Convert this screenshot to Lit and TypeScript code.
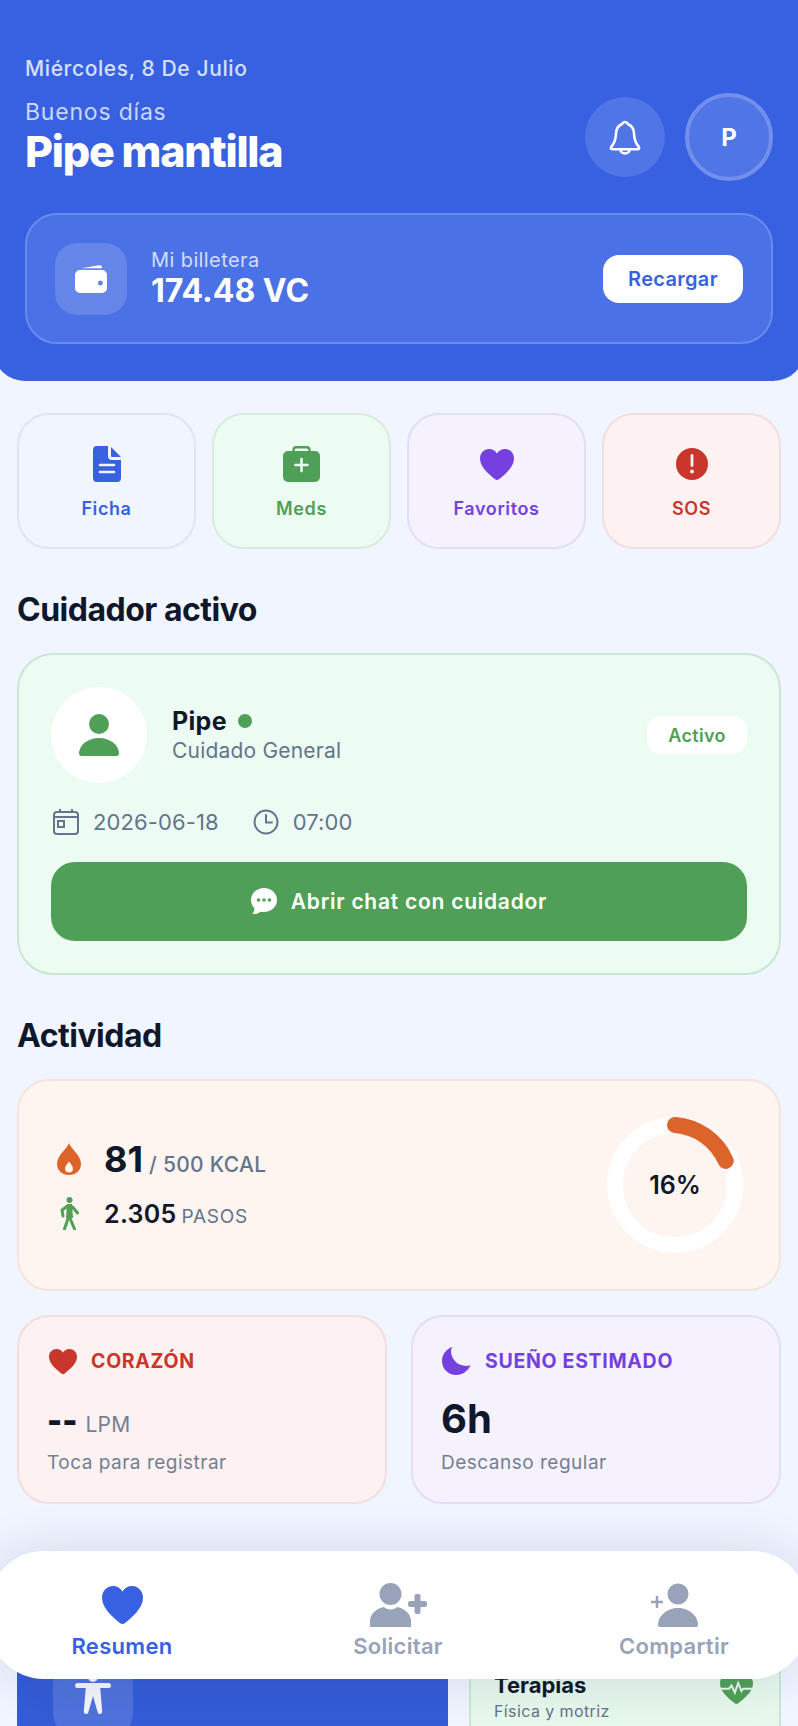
import { LitElement, css, html, svg } from 'lit';
import { customElement } from 'lit/decorators.js';

const heartPath =
  'M12 21.6c-.4 0-.8-.15-1.1-.4C7.6 18.4 2 14 2 8.6 2 5.2 4.5 2.8 7.4 2.8c1.9 0 3.6 1 4.6 2.7 1-1.7 2.7-2.7 4.6-2.7 2.9 0 5.4 2.4 5.4 5.8 0 5.4-5.6 9.8-8.9 12.6-.3.25-.7.4-1.1.4Z';

const heart = (cls: string) => html`<svg class=${cls} viewBox="2 2.8 20 18.8" preserveAspectRatio="none">
  <path d=${heartPath} fill="currentColor"></path>
</svg>`;

const docIcon = svg`<svg class="qa-icon doc" viewBox="0 0 28 36">
  <path fill="currentColor" d="M4 0h11v10a4 4 0 0 0 4 4h9v18a4 4 0 0 1-4 4H4a4 4 0 0 1-4-4V4a4 4 0 0 1 4-4Z"></path>
  <path fill="currentColor" d="M18 1l10 10h-9a1 1 0 0 1-1-1Z"></path>
  <path stroke="#f0f5ff" stroke-width="2.6" stroke-linecap="round" d="M7 19h14M7 26h14"></path>
</svg>`;

const medIcon = svg`<svg class="qa-icon med" viewBox="0 0 37 36">
  <path fill="none" stroke="currentColor" stroke-width="2.4" d="M10.500 6V4a2.800 2.800 0 0 1 2.800-2.800h10.400A2.800 2.800 0 0 1 26.500 4v2"></path>
  <rect y="5" width="37" height="31" rx="5" fill="currentColor"></rect>
  <path stroke="#edfcf3" stroke-width="2.6" stroke-linecap="round" d="M18.500 13v12M12.500 19h12"></path>
</svg>`;

const alertIcon = svg`<svg class="qa-icon sos" viewBox="0 0 32 32">
  <circle cx="16" cy="16" r="16" fill="currentColor"></circle>
  <path stroke="#fef1f1" stroke-width="2.800" stroke-linecap="round" d="M16 7.500v10"></path>
  <circle cx="16" cy="23.500" r="1.900" fill="#fef1f1"></circle>
</svg>`;

const moon = svg`<svg class="mini moon" viewBox="0 0 29 28">
  <path fill="currentColor" d="M10.500 0C4.300 1.700 0 7.400 0 14c0 7.900 6.400 14 14.300 14 6.300 0 11.700-3.900 14.200-9.700-1.300.5-2.800.7-4.400.7C15.800 19 9 12.400 9 4.100 9 2.600 9.500 1.300 10.500 0Z"></path>
</svg>`;

const quickActions = [
  { label: 'Ficha', cls: 'blue', icon: docIcon },
  { label: 'Meds', cls: 'green', icon: medIcon },
  { label: 'Favoritos', cls: 'purple', icon: heart('qa-icon fav') },
  { label: 'SOS', cls: 'red', icon: alertIcon },
];

@customElement('app-root')
export class AppRoot extends LitElement {
  static styles = css`
    :host {
      display: block;
      position: relative;
      width: 798px;
      height: 1726px;
      overflow: hidden;
      background: #f0f5ff;
      font-family: Inter, 'Liberation Sans', sans-serif;
      color: #0f172a;
    }

    svg {
      display: block;
      flex: none;
    }

    .header {
      box-sizing: border-box;
      height: 381px;
      margin: 0 -7px;
      padding: 57px 32px 0;
      background: #3861e2;
      border-radius: 0 0 32px 32px;
      color: #fff;
    }

    .date {
      font-size: 21px;
      line-height: 24px;
      font-weight: 500;
      letter-spacing: 0.6px;
      color: #d5e0fb;
    }

    .top-row {
      display: flex;
      align-items: center;
      margin-top: 12px;
    }

    .greeting {
      flex: 1;
    }

    .hello {
      font-size: 23px;
      line-height: 28px;
      letter-spacing: 0.8px;
      color: #c9d7fa;
    }

    .name {
      font-size: 43px;
      line-height: 50px;
      font-weight: 800;
      letter-spacing: -1.25px;
    }

    .bell {
      width: 80px;
      height: 80px;
      border-radius: 50%;
      background: #4f75e6;
      display: flex;
      align-items: center;
      justify-content: center;
      margin-right: 20px;
    }

    .avatar {
      box-sizing: border-box;
      width: 88px;
      height: 88px;
      border-radius: 50%;
      border: 4px solid #7290eb;
      background: #4f75e6;
      display: flex;
      align-items: center;
      justify-content: center;
      font-size: 24px;
      font-weight: 700;
    }

    .wallet {
      box-sizing: border-box;
      height: 131px;
      margin-top: 32px;
      padding: 0 28px;
      display: flex;
      align-items: center;
      border: 2px solid #6b8aeb;
      border-radius: 32px;
      background: #4a71e5;
    }

    .wallet-icon {
      width: 72px;
      height: 72px;
      border-radius: 22px;
      background: #6685e9;
      display: flex;
      align-items: center;
      justify-content: center;
      margin-right: 24px;
    }

    .wallet-info {
      flex: 1;
      padding-top: 1px;
    }

    .wallet-label {
      font-size: 20px;
      line-height: 24px;
      letter-spacing: 0.4px;
      color: #d2ddfa;
    }

    .wallet-value {
      font-size: 32px;
      line-height: 38px;
      font-weight: 700;
    }

    .recharge {
      width: 140px;
      height: 48px;
      border-radius: 16px;
      background: #fff;
      color: #3861e2;
      font-size: 20px;
      font-weight: 600;
      letter-spacing: 0.3px;
      display: flex;
      align-items: center;
      justify-content: center;
    }

    .content {
      padding: 32px 17px 0;
    }

    .actions {
      display: grid;
      grid-template-columns: repeat(4, 1fr);
      gap: 16px;
    }

    .action {
      box-sizing: border-box;
      height: 136px;
      border: 2px solid;
      border-radius: 32px;
      display: flex;
      flex-direction: column;
      align-items: center;
      font-size: 18px;
      line-height: 24px;
      font-weight: 600;
      letter-spacing: 0.6px;
    }

    .action .slot {
      height: 36px;
      margin-top: 31px;
      margin-bottom: 15px;
      display: flex;
      align-items: center;
    }

    .action.blue { background: #f0f5ff; border-color: #dce4f8; color: #3861e2; }
    .action.green { background: #edfcf3; border-color: #d7ecdf; color: #4fa056; }
    .action.purple { background: #f5f2fe; border-color: #e3ddf6; color: #7540e0; }
    .action.red { background: #fef1f1; border-color: #f3dde0; color: #c9372c; }

    .qa-icon.doc { width: 28px; height: 36px; }
    .qa-icon.med { width: 37px; height: 36px; }
    .qa-icon.fav { width: 34px; height: 31px; }
    .qa-icon.sos { width: 32px; height: 32px; }

    h2 {
      margin: 40px 0 22px;
      font-size: 32px;
      line-height: 42px;
      font-weight: 700;
      letter-spacing: -0.5px;
    }

    .carer {
      box-sizing: border-box;
      height: 322px;
      padding: 32px 32px 0;
      background: #edfcf3;
      border: 2px solid #c9e6d3;
      border-radius: 36px;
    }

    .carer-row {
      display: flex;
      align-items: center;
    }

    .carer-avatar {
      width: 96px;
      height: 96px;
      border-radius: 50%;
      background: #fff;
      display: flex;
      align-items: center;
      justify-content: center;
      margin-right: 25px;
    }

    .carer-info {
      flex: 1;
    }

    .carer-name {
      display: flex;
      align-items: center;
      gap: 11px;
      font-size: 25px;
      line-height: 32px;
      font-weight: 700;
      letter-spacing: 0.3px;
    }

    .dot {
      width: 14px;
      height: 14px;
      border-radius: 50%;
      background: #4fa056;
    }

    .carer-sub {
      font-size: 21px;
      line-height: 28px;
      letter-spacing: 0.2px;
      color: #64748b;
    }

    .pill {
      width: 100px;
      height: 38px;
      border-radius: 14px;
      background: #fff;
      color: #4fa056;
      font-size: 18px;
      font-weight: 600;
      letter-spacing: 0.3px;
      display: flex;
      align-items: center;
      justify-content: center;
    }

    .meta {
      display: flex;
      align-items: center;
      height: 28px;
      margin-top: 25px;
      font-size: 22px;
      letter-spacing: 0.1px;
      color: #64748b;
    }

    .meta svg { margin-left: 2px; margin-right: 14px; }
    .meta .time { margin-left: 34px; }

    .chat {
      height: 79px;
      margin-top: 26px;
      border-radius: 24px;
      background: #4fa056;
      color: #fff;
      display: flex;
      align-items: center;
      justify-content: center;
      gap: 14px;
      font-size: 21px;
      font-weight: 600;
      letter-spacing: 0.75px;
    }

    .activity {
      box-sizing: border-box;
      height: 212px;
      padding: 0 36px 0 38px;
      display: flex;
      align-items: center;
      justify-content: space-between;
      background: #fef4f0;
      border: 2px solid #f5e3dc;
      border-radius: 32px;
    }

    .stats {
      padding-bottom: 2px;
    }

    .stat {
      display: flex;
      align-items: baseline;
    }

    .stat .big {
      font-size: 36px;
      line-height: 44px;
      font-weight: 700;
    }

    .stat .mid {
      font-size: 25px;
      line-height: 36px;
      font-weight: 600;
      letter-spacing: 0.3px;
    }

    .stat .unit {
      margin-left: 6px;
      font-size: 21px;
      font-weight: 500;
      letter-spacing: 0.3px;
      color: #64748b;
    }

    .stat .unit.light {
      margin-left: 5px;
      font-size: 19px;
      font-weight: 400;
      letter-spacing: 0.7px;
    }

    .stat-row {
      display: flex;
      align-items: center;
      gap: 23px;
    }

    .stat-row + .stat-row {
      margin-top: 15px;
    }

    .ring {
      position: relative;
      width: 136px;
      height: 136px;
    }

    .ring span {
      position: absolute;
      inset: 0;
      display: flex;
      align-items: center;
      justify-content: center;
      font-size: 25px;
      font-weight: 600;
    }

    .metrics {
      display: grid;
      grid-template-columns: 1fr 1fr;
      gap: 24px;
      margin-top: 24px;
    }

    .metric {
      box-sizing: border-box;
      height: 189px;
      padding: 30px 28px 0;
      border: 2px solid;
      border-radius: 32px;
    }

    .metric.red { background: #fef1f1; border-color: #f3dde0; }
    .metric.purple { background: #f5f2fe; border-color: #e3ddf6; }

    .metric-head {
      display: flex;
      align-items: center;
      height: 28px;
      gap: 14px;
      font-size: 19.5px;
      font-weight: 700;
      letter-spacing: 0.7px;
    }

    .metric.red .metric-head { color: #c9372c; }
    .metric.purple .metric-head { color: #7540e0; }

    .mini { width: 28px; height: 25px; margin-left: 2px; }
    .mini.moon { width: 29px; height: 28px; margin-left: 1px; }

    .metric-value {
      display: flex;
      align-items: baseline;
      height: 48px;
      margin-top: 20px;
      font-size: 40px;
      line-height: 48px;
      font-weight: 700;
    }

    .metric-value.dashes {
      height: 46px;
      margin-top: 22px;
      font-size: 32px;
      font-weight: 900;
    }

    .metric-value small {
      margin-left: 8px;
      font-size: 21px;
      font-weight: 400;
      letter-spacing: 0.3px;
      color: #737f92;
    }

    .metric-note {
      margin-top: 7px;
      font-size: 19px;
      line-height: 26px;
      letter-spacing: 0.5px;
      color: #737f92;
    }

    .below {
      display: grid;
      grid-template-columns: 431px 312px;
      gap: 21px;
      margin-top: 90px;
    }

    .tall {
      height: 200px;
      background: #335cd6;
      padding: 60px 0 0 36px;
      border-radius: 32px 32px 0 0;
    }

    .tile {
      width: 80px;
      height: 86px;
      border-radius: 28px;
      background: #4f72db;
      display: flex;
      justify-content: center;
    }

    .tile svg {
      margin-top: 18px;
    }

    .therapy {
      box-sizing: border-box;
      height: 200px;
      padding: 75px 26px 0 23px;
      background: #e7f8ec;
      border: 2px solid #c9e6d3;
      border-radius: 32px 32px 0 0;
      display: flex;
      justify-content: space-between;
    }

    .therapy svg {
      margin-top: 3px;
    }

    .therapy b {
      display: block;
      font-size: 22px;
      line-height: 28px;
      font-weight: 700;
    }

    .therapy span {
      display: block;
      font-size: 16px;
      line-height: 24px;
      letter-spacing: 0.4px;
      color: #64748b;
    }

    .nav {
      position: absolute;
      left: -12px;
      top: 1551px;
      width: 820px;
      height: 128px;
      border-radius: 56px;
      background: #fff;
      box-shadow: 0 0 50px rgba(30, 50, 100, 0.14);
      display: grid;
      grid-template-columns: repeat(3, 276px);
      justify-content: center;
    }

    .nav-item {
      display: flex;
      flex-direction: column;
      align-items: center;
      font-size: 22px;
      line-height: 28px;
      font-weight: 600;
      letter-spacing: 0.3px;
      color: #98a2b8;
    }

    .nav-item.on {
      color: #3861e2;
    }

    .nav-slot {
      height: 44px;
      margin-top: 32px;
      margin-bottom: 5px;
      display: flex;
      align-items: center;
    }

    .nav-heart { width: 41px; height: 38px; }
  `;

  render() {
    return html`
      <div class="header">
        <div class="date">Miércoles, 8 De Julio</div>
        <div class="top-row">
          <div class="greeting">
            <div class="hello">Buenos días</div>
            <div class="name">Pipe mantilla</div>
          </div>
          <div class="bell">
            <svg width="32" height="35" viewBox="0 0 32 35" fill="none" stroke="#fff" stroke-width="2.600" stroke-linejoin="round">
              <path d="M16 2c-1.500 0-2.500 1-3.200 2.300C8.500 6 7.200 9.700 7 13.500c-.2 4.700-1 8-3.200 11.200-.8 1.200-1.900 2.200-1.900 3.300 0 .8.600 1.200 1.500 1.200h25.200c.9 0 1.500-.4 1.500-1.200 0-1.100-1.100-2.100-1.900-3.300-2.200-3.200-3-6.500-3.200-11.200-.2-3.800-1.500-7.500-5.800-9.200C18.500 3 17.500 2 16 2Z"></path>
              <path d="M11.500 29.500c0 2.300 2 4 4.500 4s4.500-1.700 4.500-4"></path>
            </svg>
          </div>
          <div class="avatar">P</div>
        </div>
        <div class="wallet">
          <div class="wallet-icon">
            <svg width="32" height="28" viewBox="0 0 32 28">
              <path fill="#fff" d="M5 3.500 24 .3c1.600-.3 2.900.6 3 2.200l.1.800H6Z"></path>
              <path fill="#fff" fill-rule="evenodd" d="M5 5h22a5 5 0 0 1 5 5v13a5 5 0 0 1-5 5H5a5 5 0 0 1-5-5V10a5 5 0 0 1 5-5Zm20.500 10.500a2.500 2.500 0 1 0 0 5 2.500 2.500 0 0 0 0-5Z"></path>
            </svg>
          </div>
          <div class="wallet-info">
            <div class="wallet-label">Mi billetera</div>
            <div class="wallet-value">174.48 VC</div>
          </div>
          <div class="recharge">Recargar</div>
        </div>
      </div>

      <div class="content">
        <div class="actions">
          ${quickActions.map(
            (a) => html`<div class="action ${a.cls}">
              <div class="slot">${a.icon}</div>
              ${a.label}
            </div>`,
          )}
        </div>

        <h2>Cuidador activo</h2>
        <div class="carer">
          <div class="carer-row">
            <div class="carer-avatar">
              <svg width="40" height="42" viewBox="0 0 40 42" fill="#4fa056">
                <circle cx="20" cy="10" r="10"></circle>
                <path d="M20 24c11 0 20 7 20 15.500 0 1.500-1 2.500-2.500 2.500h-35C1 42 0 41 0 39.500 0 31 9 24 20 24Z"></path>
              </svg>
            </div>
            <div class="carer-info">
              <div class="carer-name">Pipe<span class="dot"></span></div>
              <div class="carer-sub">Cuidado General</div>
            </div>
            <div class="pill">Activo</div>
          </div>
          <div class="meta">
            <svg width="26" height="26" viewBox="0 0 26 26" fill="none" stroke="#64748b" stroke-width="2">
              <rect x="1" y="3" width="24" height="22" rx="3"></rect>
              <path d="M1 8h24M7 0v3M19 0v3"></path>
              <rect x="5" y="12" width="6" height="6"></rect>
            </svg>
            <span>2026-06-18</span>
            <svg class="time" width="26" height="26" viewBox="0 0 26 26" fill="none" stroke="#64748b" stroke-width="2" stroke-linecap="round" stroke-linejoin="round">
              <circle cx="13" cy="13" r="11.500"></circle>
              <path d="M13 6v7.500h6"></path>
            </svg>
            <span>07:00</span>
          </div>
          <div class="chat">
            <svg width="26" height="27" viewBox="0 0 26 27">
              <path fill="#fff" d="M13 0C5.800 0 0 5.400 0 12c0 3 1.200 5.800 3.200 7.900.3 2.300-.4 4.700-1.800 6.100 2.800.4 5.900-.5 8-2.300 1.100.2 2.400.3 3.600.3 7.200 0 13-5.400 13-12S20.200 0 13 0Z"></path>
              <circle cx="7.500" cy="12" r="1.800" fill="#4fa056"></circle>
              <circle cx="13" cy="12" r="1.800" fill="#4fa056"></circle>
              <circle cx="18.500" cy="12" r="1.800" fill="#4fa056"></circle>
            </svg>
            Abrir chat con cuidador
          </div>
        </div>

        <h2>Actividad</h2>
        <div class="activity">
          <div class="stats">
            <div class="stat-row">
              <svg width="24" height="32" viewBox="0 0 24 32">
                <path fill="#dc6329" fill-rule="evenodd" d="M12 0c1.500 5.500 12 12 12 21 0 6.500-5.300 11-12 11S0 27.500 0 21C0 12 10.500 5.500 12 0Zm0 18.500c-1.600 2.200-4 4.500-4 7a4 4 0 0 0 8 0c0-2.500-2.400-4.800-4-7Z"></path>
              </svg>
              <div class="stat"><span class="big">81</span><span class="unit">/ 500 KCAL</span></div>
            </div>
            <div class="stat-row">
              <svg width="24" height="33" viewBox="-2.500 0 24 33" fill="#4fa056">
                <circle cx="10" cy="3" r="3"></circle>
                <path d="M7.500 7h5l1 14H6.500Z"></path>
                <path d="M8 9 2.500 13l1 6M13 10l5 6M9 20 5 32M10 20l5 12" fill="none" stroke="#4fa056" stroke-width="3" stroke-linecap="round" stroke-linejoin="round"></path>
              </svg>
              <div class="stat"><span class="mid">2.305</span><span class="unit light">PASOS</span></div>
            </div>
          </div>
          <div class="ring">
            <svg width="136" height="136" viewBox="0 0 136 136" fill="none" stroke-width="16">
              <circle cx="68" cy="68" r="60" stroke="#fff"></circle>
              <path d="M68 8a60 60 0 0 1 50.700 35.900" stroke="#dc6329" stroke-linecap="round"></path>
            </svg>
            <span>16%</span>
          </div>
        </div>

        <div class="metrics">
          <div class="metric red">
            <div class="metric-head">${heart('mini')}CORAZÓN</div>
            <div class="metric-value dashes">--<small>LPM</small></div>
            <div class="metric-note">Toca para registrar</div>
          </div>
          <div class="metric purple">
            <div class="metric-head">${moon}SUEÑO ESTIMADO</div>
            <div class="metric-value">6h</div>
            <div class="metric-note">Descanso regular</div>
          </div>
        </div>

        <div class="below">
          <div class="tall">
            <div class="tile">
              <svg width="36" height="50" viewBox="0 0 36 50">
                <circle cx="18" cy="5" r="5" fill="#f4f6fd"></circle>
                <rect y="11" width="36" height="5" rx="2.500" fill="#f4f6fd"></rect>
                <path fill="#f4f6fd" d="M11 13h14l2.200 26.500a2.300 2.300 0 0 1-4.600.4L18 24l-4.600 15.900a2.300 2.300 0 0 1-4.600-.4Z"></path>
              </svg>
            </div>
          </div>
          <div class="therapy">
            <div>
              <b>Terapias</b>
              <span>Física y motriz</span>
            </div>
            <svg width="33" height="30" viewBox="2 2.800 20 18.800" preserveAspectRatio="none">
              <path d=${heartPath} fill="#4fa056"></path>
              <path d="M1.500 12h6l1.500-2 2 4.500 2-6 2 5 1-1.500h6.500" fill="none" stroke="#e7f8ec" stroke-width="1.200"></path>
            </svg>
          </div>
        </div>
      </div>

      <div class="nav">
        <div class="nav-item on">
          <div class="nav-slot">${heart('nav-heart')}</div>
          Resumen
        </div>
        <div class="nav-item">
          <div class="nav-slot">
            <svg width="57" height="44" viewBox="0 0 57 44" fill="#98a2b8">
              <circle cx="20.500" cy="11" r="11"></circle>
              <path d="M0 44V38c0-8 8-13 14-14 2 1.800 4 2.500 6.500 2.500S25 25.800 27 24c6 1 14 6 14 14v6Z"></path>
              <rect x="44.500" y="11" width="6" height="20" rx="2.200"></rect>
              <rect x="38" y="18" width="19" height="6" rx="2.200"></rect>
            </svg>
          </div>
          Solicitar
        </div>
        <div class="nav-item">
          <div class="nav-slot">
            <svg width="47" height="44" viewBox="0 0 47 44" fill="#98a2b8">
              <circle cx="27" cy="11" r="10.500"></circle>
              <path d="M27 25c10.500 0 20 7.500 20 17 0 1.200-.8 2-2 2H9c-1.200 0-2-.8-2-2 0-9.500 9.500-17 20-17Z"></path>
              <path d="M6 13v12M0 19h12" stroke="#98a2b8" stroke-width="2.500" fill="none"></path>
            </svg>
          </div>
          Compartir
        </div>
      </div>
    `;
  }
}
